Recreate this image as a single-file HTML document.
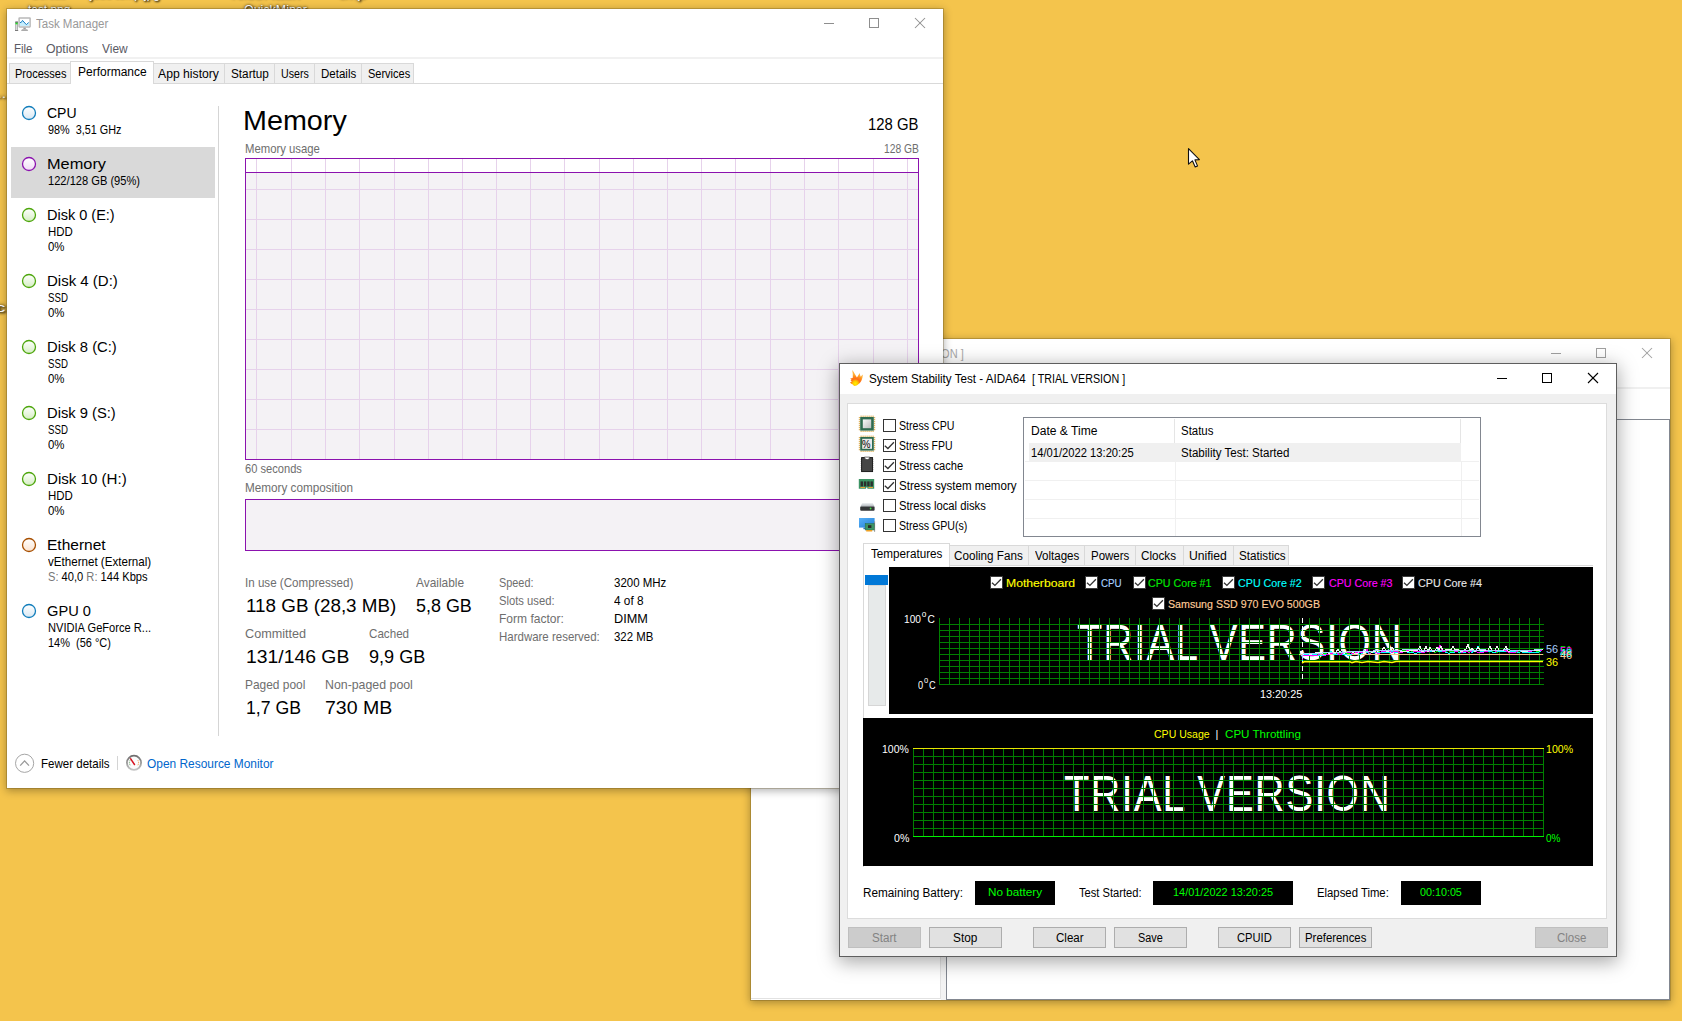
<!DOCTYPE html>
<html><head><meta charset="utf-8"><title>Desktop</title>
<style>
html,body{margin:0;padding:0}
body{width:1682px;height:1021px;overflow:hidden;background:#f4c44c;position:relative;font-family:"Liberation Sans",sans-serif}
.a{position:absolute}
.t{position:absolute;white-space:nowrap;line-height:1;transform-origin:0 0;font-family:"Liberation Sans",sans-serif}
.win{position:absolute;background:#fff;overflow:hidden}
.sh{position:absolute}
svg{position:absolute;overflow:visible}
.tab{position:absolute;background:#f0f0f0;border:1px solid #d9d9d9;box-sizing:border-box}
.cb{position:absolute;width:13px;height:13px;box-sizing:border-box;border:1px solid #333;background:#fff}
.btn{position:absolute;box-sizing:border-box;border:1px solid #adadad;background:#e1e1e1;height:21px}
.btn.dis{background:#cccccc;border-color:#bfbfbf}
.blk{position:absolute;background:#000}
</style></head><body>


<span class="t" style="left:27.91px;top:4.00px;font-size:12px;color:#fff;transform:scaleX(0.9913);text-shadow:1px 1px 2px #000,0 0 3px rgba(0,0,0,.9);">test.png</span>
<span class="t" style="left:244.38px;top:4.00px;font-size:12px;color:#fff;transform:scaleX(1.0360);text-shadow:1px 1px 2px #000,0 0 3px rgba(0,0,0,.9);">QuickMiner</span>
<span class="t" style="left:32.48px;top:-12.00px;font-size:12px;color:#fff;transform:scaleX(0.8716);text-shadow:1px 1px 2px #000,0 0 3px rgba(0,0,0,.9);">Bureau</span>
<span class="t" style="left:90.41px;top:-12.00px;font-size:12px;color:#fff;transform:scaleX(0.9782);text-shadow:1px 1px 2px #000,0 0 3px rgba(0,0,0,.9);">jobs temp.jpg</span>
<span class="t" style="left:231.20px;top:-12.00px;font-size:12px;color:#fff;transform:scaleX(1.3284);text-shadow:1px 1px 2px #000,0 0 3px rgba(0,0,0,.9);">NiceHash</span>
<span class="t" style="left:339.19px;top:-12.00px;font-size:12px;color:#fff;transform:scaleX(1.3559);text-shadow:1px 1px 2px #000,0 0 3px rgba(0,0,0,.9);">tmp</span>
<span class="t" style="left:-6.78px;top:88.00px;font-size:12px;color:#fff;transform:scaleX(1.3078);text-shadow:1px 1px 2px #000,0 0 3px rgba(0,0,0,.9);">...</span>
<span class="t" style="left:-5.05px;top:302.00px;font-size:12px;color:#fff;transform:scaleX(1.7442);text-shadow:1px 1px 2px #000,0 0 3px rgba(0,0,0,.9);">c</span>
<!-- ===== AIDA64 main window (behind, inactive) ===== -->
<div class="a" style="left:751px;top:339px;width:919px;height:661px;background:#fff;box-shadow:0 0 0 1px rgba(90,70,20,.27),0 2px 8px 1px rgba(0,0,0,.30)"></div>
<div class="a" style="left:751px;top:387px;width:919px;height:2px;background:#f0f0f0"></div>
<div class="a" style="left:751px;top:419px;width:190px;height:580px;box-sizing:border-box;border-right:1px solid #e2e2e2;border-bottom:1px solid #e2e2e2;background:#fff"></div>
<div class="a" style="left:941px;top:419px;width:5px;height:581px;background:#f3f3f3"></div>
<div class="a" style="left:946px;top:419px;width:724px;height:581px;box-sizing:border-box;border:1px solid #828790;background:#fff"></div>
<svg style="left:1548px;top:345px" width="110" height="18" viewBox="0 0 110 18">
 <g stroke="#a0a0a0" stroke-width="1" fill="none" shape-rendering="crispEdges">
  <line x1="3" y1="8.5" x2="13" y2="8.5"/>
  <rect x="48.5" y="3.5" width="9" height="9"/>
 </g>
 <g stroke="#a0a0a0" stroke-width="1.05" fill="none"><line x1="94" y1="3" x2="104" y2="13"/><line x1="104" y1="3" x2="94" y2="13"/></g>
</svg>
<span class="t" style="left:780.45px;top:348.00px;font-size:12.3px;color:#a8a8a8;transform:scaleX(0.8964);">AIDA64 Extreme&nbsp; [ TRIAL VERSION ]</span>

<!-- ===== Task Manager window ===== -->
<div class="a" style="left:7px;top:9px;width:936px;height:779px;background:#fff;box-shadow:0 0 0 1px rgba(90,70,20,.27),0 2px 8px 1px rgba(0,0,0,.30)"></div>
<!-- title icon -->
<svg style="left:14px;top:16px" width="18" height="16" viewBox="14 16 18 16">
 <defs><linearGradient id="twr" x1="0" y1="0" x2="1" y2="0"><stop offset="0" stop-color="#9a9a9a"/><stop offset=".5" stop-color="#e0e0e0"/><stop offset="1" stop-color="#9a9a9a"/></linearGradient></defs>
 <rect x="15.2" y="21.6" width="2.8" height="9" rx=".8" fill="url(#twr)"/>
 <rect x="15.4" y="21.6" width="2.4" height="1.1" fill="#4a4450"/>
 <rect x="15.5" y="22.7" width="2.2" height="1.6" fill="#22e022"/>
 <rect x="15" y="30" width="3.2" height=".9" fill="#6e6e6e"/>
 <rect x="19.1" y="17.9" width="11" height="9" rx=".4" fill="#fff" stroke="#b9b9b9" stroke-width="1.5"/>
 <path d="M19.9 22.6 L21.3 22.3 L22.5 20.4 L26.4 24.7 L28.7 22.4 L29.3 22.4 L29.3 26 L19.9 26 Z" fill="#c6edfc"/>
 <polyline points="20,22.6 21.3,22.3 22.5,20.4 26.4,24.7 28.7,22.4" fill="none" stroke="#1a80c6" stroke-width="1"/>
 <rect x="23.4" y="27.7" width="2.4" height="1.6" fill="#9c9c9c"/>
 <path d="M22 29.3 h5.2 l1 1.6 h-7.2 z" fill="#ababab"/>
</svg>
<!-- window controls -->
<svg style="left:820px;top:14px" width="110" height="20" viewBox="0 0 110 20">
 <g stroke="#8e8e8e" stroke-width="1" fill="none" shape-rendering="crispEdges">
  <line x1="4" y1="9.5" x2="14" y2="9.5"/>
  <rect x="49.5" y="4.5" width="9" height="9"/>
 </g>
 <g stroke="#8e8e8e" stroke-width="1.05" fill="none"><line x1="95" y1="4" x2="105" y2="14"/><line x1="105" y1="4" x2="95" y2="14"/></g>
</svg>
<!-- menu underline + tab strip line -->
<div class="a" style="left:7px;top:57px;width:936px;height:2px;background:#f1f1f1"></div>
<div class="a" style="left:7px;top:83px;width:936px;height:1px;background:#d9d9d9"></div>
<!-- tabs -->
<div class="tab" style="left:9px;top:63px;width:62px;height:21px"></div>
<div class="tab" style="left:153px;top:63px;width:72px;height:21px"></div>
<div class="tab" style="left:224px;top:63px;width:51px;height:21px"></div>
<div class="tab" style="left:274px;top:63px;width:41px;height:21px"></div>
<div class="tab" style="left:314px;top:63px;width:48px;height:21px"></div>
<div class="tab" style="left:361px;top:63px;width:53px;height:21px"></div>
<div class="tab" style="left:70px;top:61px;width:84px;height:23px;background:#fff;border-bottom:none"></div>
<!-- left list -->
<div class="a" style="left:11px;top:147px;width:204px;height:51px;background:#d9d9d9"></div>
<div class="a" style="left:218px;top:106px;width:1px;height:630px;background:#d5d5d5"></div>
<svg style="left:0;top:0" width="60" height="700" viewBox="0 0 60 700">
 <defs>
  <linearGradient id="gb" x1="0" y1="0" x2="0" y2="1"><stop offset="0" stop-color="#fff"/><stop offset="1" stop-color="#d9e8f3"/></linearGradient>
  <linearGradient id="gp" x1="0" y1="0" x2="0" y2="1"><stop offset="0" stop-color="#fff"/><stop offset="1" stop-color="#f0dcf5"/></linearGradient>
  <linearGradient id="gg" x1="0" y1="0" x2="0" y2="1"><stop offset="0" stop-color="#fff"/><stop offset="1" stop-color="#d5eec3"/></linearGradient>
  <linearGradient id="go" x1="0" y1="0" x2="0" y2="1"><stop offset="0" stop-color="#fff"/><stop offset="1" stop-color="#fbe3cf"/></linearGradient>
 </defs>
 <g stroke-width="1.3">
  <circle cx="29" cy="113" r="6.5" fill="url(#gb)" stroke="#117dbb"/>
  <circle cx="29" cy="164" r="6.5" fill="url(#gp)" stroke="#8b12ae"/>
  <circle cx="29" cy="215" r="6.5" fill="url(#gg)" stroke="#4da60c"/>
  <circle cx="29" cy="281" r="6.5" fill="url(#gg)" stroke="#4da60c"/>
  <circle cx="29" cy="347" r="6.5" fill="url(#gg)" stroke="#4da60c"/>
  <circle cx="29" cy="413" r="6.5" fill="url(#gg)" stroke="#4da60c"/>
  <circle cx="29" cy="479" r="6.5" fill="url(#gg)" stroke="#4da60c"/>
  <circle cx="29" cy="545" r="6.5" fill="url(#go)" stroke="#a74f01"/>
  <circle cx="29" cy="611" r="6.5" fill="url(#gb)" stroke="#117dbb"/>
 </g>
</svg>
<!-- memory usage graph -->
<div class="a" style="left:245px;top:158px;width:674px;height:302px;box-sizing:border-box;border:1px solid #8b12ae;background:#fff"></div>
<div class="a" style="left:246px;top:173px;width:672px;height:286px;background:#f4f2f5"></div>
<svg style="left:246px;top:159px" width="672" height="300" viewBox="246 159 672 300" shape-rendering="crispEdges">
 <g stroke="#e6d2eb" stroke-width="1">
  <line x1="256.5" y1="159" x2="256.5" y2="459"/><line x1="291.5" y1="159" x2="291.5" y2="459"/><line x1="325.5" y1="159" x2="325.5" y2="459"/><line x1="359.5" y1="159" x2="359.5" y2="459"/><line x1="394.5" y1="159" x2="394.5" y2="459"/><line x1="428.5" y1="159" x2="428.5" y2="459"/><line x1="462.5" y1="159" x2="462.5" y2="459"/><line x1="496.5" y1="159" x2="496.5" y2="459"/><line x1="530.5" y1="159" x2="530.5" y2="459"/><line x1="564.5" y1="159" x2="564.5" y2="459"/><line x1="599.5" y1="159" x2="599.5" y2="459"/><line x1="633.5" y1="159" x2="633.5" y2="459"/><line x1="667.5" y1="159" x2="667.5" y2="459"/><line x1="701.5" y1="159" x2="701.5" y2="459"/><line x1="735.5" y1="159" x2="735.5" y2="459"/><line x1="770.5" y1="159" x2="770.5" y2="459"/><line x1="804.5" y1="159" x2="804.5" y2="459"/><line x1="838.5" y1="159" x2="838.5" y2="459"/><line x1="873.5" y1="159" x2="873.5" y2="459"/><line x1="907.5" y1="159" x2="907.5" y2="459"/><line x1="246" y1="189.5" x2="918" y2="189.5"/><line x1="246" y1="219.5" x2="918" y2="219.5"/><line x1="246" y1="249.5" x2="918" y2="249.5"/><line x1="246" y1="279.5" x2="918" y2="279.5"/><line x1="246" y1="309.5" x2="918" y2="309.5"/><line x1="246" y1="339.5" x2="918" y2="339.5"/><line x1="246" y1="369.5" x2="918" y2="369.5"/><line x1="246" y1="399.5" x2="918" y2="399.5"/><line x1="246" y1="429.5" x2="918" y2="429.5"/>
 </g>
 <line x1="246" y1="172.5" x2="918" y2="172.5" stroke="#8b12ae" stroke-width="1"/>
</svg>
<!-- memory composition -->
<div class="a" style="left:245px;top:499px;width:674px;height:52px;box-sizing:border-box;border:1px solid #8b12ae;background:#f4f2f5"></div>
<!-- footer icons -->
<svg style="left:14px;top:752px" width="140" height="24" viewBox="14 752 140 24">
 <defs><linearGradient id="rg" x1="0" y1="0" x2="0" y2="1"><stop offset="0" stop-color="#6f6f6f"/><stop offset="1" stop-color="#c4c4c4"/></linearGradient></defs>
 <circle cx="24.6" cy="763.3" r="9.1" fill="#fff" stroke="#a6a6a6" stroke-width="1"/>
 <polyline points="20.2,765.6 24.6,760.9 29,765.6" fill="none" stroke="#9a9a9a" stroke-width="1.3"/>
 <line x1="117.5" y1="756" x2="117.5" y2="770" stroke="#d4d4d4" stroke-width="1"/>
 <circle cx="134" cy="762.8" r="7.1" fill="#fbfbfb" stroke="url(#rg)" stroke-width="1.8"/>
 <path d="M130.2 760.2 A4.6 4.6 0 0 0 130.4 765.6" fill="none" stroke="#5a9a5a" stroke-width=".8" stroke-dasharray="1.2 .8"/>
 <path d="M137.8 760.2 A4.6 4.6 0 0 1 137.6 765.6" fill="none" stroke="#f08020" stroke-width=".8" stroke-dasharray="1.2 .8"/>
 <path d="M129.6 758.4 L131 758 L135.4 764.6 L134.2 765.6 Z" fill="#d8101e"/>
</svg>
<span class="t" style="left:35.92px;top:18.00px;font-size:12.3px;color:#999;transform:scaleX(0.9362);">Task Manager</span>
<span class="t" style="left:14.03px;top:43.00px;font-size:12.3px;color:#5a5a64;transform:scaleX(0.9332);">File</span>
<span class="t" style="left:45.88px;top:43.00px;font-size:12.3px;color:#5a5a64;">Options</span>
<span class="t" style="left:101.60px;top:43.00px;font-size:12.3px;color:#5a5a64;transform:scaleX(0.9696);">View</span>
<span class="t" style="left:14.65px;top:68.00px;font-size:12.3px;color:#000;transform:scaleX(0.8964);">Processes</span>
<span class="t" style="left:77.90px;top:66.00px;font-size:12.3px;color:#000;transform:scaleX(0.9749);">Performance</span>
<span class="t" style="left:157.79px;top:68.00px;font-size:12.3px;color:#000;transform:scaleX(0.9909);">App history</span>
<span class="t" style="left:230.71px;top:68.00px;font-size:12.3px;color:#000;transform:scaleX(0.9563);">Startup</span>
<span class="t" style="left:280.87px;top:68.00px;font-size:12.3px;color:#000;transform:scaleX(0.8668);">Users</span>
<span class="t" style="left:320.82px;top:68.00px;font-size:12.3px;color:#000;transform:scaleX(0.9365);">Details</span>
<span class="t" style="left:367.75px;top:68.00px;font-size:12.3px;color:#000;transform:scaleX(0.8943);">Services</span>
<span class="t" style="left:47.00px;top:105.00px;font-size:15.2px;color:#000;transform:scaleX(0.9222);">CPU</span>
<span class="t" style="left:47.76px;top:124.00px;font-size:12.2px;color:#000;transform:scaleX(0.8887);">98%&nbsp; 3,51 GHz</span>
<span class="t" style="left:46.88px;top:156.00px;font-size:15.2px;color:#000;transform:scaleX(1.0763);">Memory</span>
<span class="t" style="left:47.74px;top:175.00px;font-size:12.2px;color:#000;transform:scaleX(0.9121);">122/128 GB (95%)</span>
<span class="t" style="left:46.97px;top:207.00px;font-size:15.2px;color:#000;transform:scaleX(0.9552);">Disk 0 (E:)</span>
<span class="t" style="left:47.73px;top:226.00px;font-size:12.2px;color:#000;transform:scaleX(0.9393);">HDD</span>
<span class="t" style="left:47.73px;top:241.00px;font-size:12.2px;color:#000;transform:scaleX(0.9361);">0%</span>
<span class="t" style="left:46.95px;top:273.00px;font-size:15.2px;color:#000;transform:scaleX(0.9879);">Disk 4 (D:)</span>
<span class="t" style="left:47.82px;top:292.00px;font-size:12.2px;color:#000;transform:scaleX(0.7931);">SSD</span>
<span class="t" style="left:47.73px;top:307.00px;font-size:12.2px;color:#000;transform:scaleX(0.9361);">0%</span>
<span class="t" style="left:46.96px;top:339.00px;font-size:15.2px;color:#000;transform:scaleX(0.9723);">Disk 8 (C:)</span>
<span class="t" style="left:47.82px;top:358.00px;font-size:12.2px;color:#000;transform:scaleX(0.7931);">SSD</span>
<span class="t" style="left:47.73px;top:373.00px;font-size:12.2px;color:#000;transform:scaleX(0.9361);">0%</span>
<span class="t" style="left:46.96px;top:405.00px;font-size:15.2px;color:#000;transform:scaleX(0.9695);">Disk 9 (S:)</span>
<span class="t" style="left:47.82px;top:424.00px;font-size:12.2px;color:#000;transform:scaleX(0.7931);">SSD</span>
<span class="t" style="left:47.73px;top:439.00px;font-size:12.2px;color:#000;transform:scaleX(0.9361);">0%</span>
<span class="t" style="left:46.94px;top:471.00px;font-size:15.2px;color:#000;transform:scaleX(0.9948);">Disk 10 (H:)</span>
<span class="t" style="left:47.73px;top:490.00px;font-size:12.2px;color:#000;transform:scaleX(0.9393);">HDD</span>
<span class="t" style="left:47.73px;top:505.00px;font-size:12.2px;color:#000;transform:scaleX(0.9361);">0%</span>
<span class="t" style="left:46.92px;top:537.00px;font-size:15.2px;color:#000;transform:scaleX(1.0220);">Ethernet</span>
<span class="t" style="left:47.72px;top:556.00px;font-size:12.2px;color:#000;transform:scaleX(0.9513);">vEthernet (External)</span>
<span class="t" style="left:47.74px;top:571.00px;font-size:12.2px;color:#000;transform:scaleX(0.9128);"><span style="color:#777">S:</span> 40,0 <span style="color:#777">R:</span> 144 Kbps</span>
<span class="t" style="left:46.97px;top:603.00px;font-size:15.2px;color:#000;transform:scaleX(0.9637);">GPU 0</span>
<span class="t" style="left:47.74px;top:622.00px;font-size:12.2px;color:#000;transform:scaleX(0.9113);">NVIDIA GeForce R...</span>
<span class="t" style="left:47.75px;top:637.00px;font-size:12.2px;color:#000;transform:scaleX(0.8993);">14%&nbsp; (56 °C)</span>
<span class="t" style="left:243.16px;top:106.00px;font-size:28.3px;color:#000;transform:scaleX(1.0157);">Memory</span>
<span class="t" style="left:868.36px;top:116.00px;font-size:16.3px;color:#000;transform:scaleX(0.9135);">128 GB</span>
<span class="t" style="left:244.93px;top:143.00px;font-size:12.2px;color:#6e6e6e;transform:scaleX(0.9291);">Memory usage</span>
<span class="t" style="left:884.38px;top:143.00px;font-size:12.2px;color:#6e6e6e;transform:scaleX(0.8471);">128 GB</span>
<span class="t" style="left:244.74px;top:463.00px;font-size:12.2px;color:#6e6e6e;transform:scaleX(0.9123);">60 seconds</span>
<span class="t" style="left:244.71px;top:482.00px;font-size:12.2px;color:#6e6e6e;transform:scaleX(0.9607);">Memory composition</span>
<span class="t" style="left:244.92px;top:577.00px;font-size:12.2px;color:#6e6e6e;transform:scaleX(0.9518);">In use (Compressed)</span>
<span class="t" style="left:416.40px;top:577.00px;font-size:12.2px;color:#6e6e6e;transform:scaleX(0.9763);">Available</span>
<span class="t" style="left:244.87px;top:628.00px;font-size:12.2px;color:#6e6e6e;transform:scaleX(1.0376);">Committed</span>
<span class="t" style="left:369.17px;top:628.00px;font-size:12.2px;color:#6e6e6e;transform:scaleX(0.9536);">Cached</span>
<span class="t" style="left:244.90px;top:679.00px;font-size:12.2px;color:#6e6e6e;transform:scaleX(0.9783);">Paged pool</span>
<span class="t" style="left:325.13px;top:679.00px;font-size:12.2px;color:#6e6e6e;transform:scaleX(1.0129);">Non-paged pool</span>
<span class="t" style="left:245.56px;top:596.00px;font-size:19.2px;color:#000;transform:scaleX(0.9811);">118 GB (28,3 MB)</span>
<span class="t" style="left:416.30px;top:596.00px;font-size:19.2px;color:#000;transform:scaleX(0.9342);">5,8 GB</span>
<span class="t" style="left:245.53px;top:647.00px;font-size:19.2px;color:#000;transform:scaleX(1.0091);">131/146 GB</span>
<span class="t" style="left:368.60px;top:647.00px;font-size:19.2px;color:#000;transform:scaleX(0.9419);">9,9 GB</span>
<span class="t" style="left:245.62px;top:698.00px;font-size:19.2px;color:#000;transform:scaleX(0.9205);">1,7 GB</span>
<span class="t" style="left:324.52px;top:698.00px;font-size:19.2px;color:#000;transform:scaleX(1.0186);">730 MB</span>
<span class="t" style="left:499.46px;top:577.00px;font-size:12.2px;color:#6e6e6e;transform:scaleX(0.8932);">Speed:</span>
<span class="t" style="left:499.44px;top:595.00px;font-size:12.2px;color:#6e6e6e;transform:scaleX(0.9211);">Slots used:</span>
<span class="t" style="left:499.40px;top:613.00px;font-size:12.2px;color:#6e6e6e;transform:scaleX(0.9871);">Form factor:</span>
<span class="t" style="left:499.43px;top:631.00px;font-size:12.2px;color:#6e6e6e;transform:scaleX(0.9418);">Hardware reserved:</span>
<span class="t" style="left:613.93px;top:577.00px;font-size:12.2px;color:#000;transform:scaleX(0.9416);">3200 MHz</span>
<span class="t" style="left:613.91px;top:595.00px;font-size:12.2px;color:#000;transform:scaleX(0.9698);">4 of 8</span>
<span class="t" style="left:613.86px;top:613.00px;font-size:12.2px;color:#000;transform:scaleX(1.0428);">DIMM</span>
<span class="t" style="left:613.93px;top:631.00px;font-size:12.2px;color:#000;transform:scaleX(0.9353);">322 MB</span>
<span class="t" style="left:40.62px;top:758.00px;font-size:12.2px;color:#000;transform:scaleX(0.9465);">Fewer details</span>
<span class="t" style="left:146.90px;top:758.00px;font-size:12.2px;color:#0066cc;transform:scaleX(0.9779);">Open Resource Monitor</span>

<!-- ===== System Stability Test window ===== -->
<div class="a" style="left:839px;top:363px;width:778px;height:594px;box-sizing:border-box;border:1px solid #5e5e5e;background:#f0f0f0;box-shadow:0 4px 18px 1px rgba(0,0,0,.35)"></div>
<div class="a" style="left:840px;top:364px;width:776px;height:30px;background:#fff"></div>
<div class="a" style="left:847px;top:403px;width:760px;height:516px;box-sizing:border-box;border:1px solid #dcdcdc;background:#fff"></div>
<svg style="left:848px;top:368px" width="18" height="20" viewBox="848 368 18 20">
 <defs>
  <radialGradient id="fl" cx="855.4" cy="383.6" r="9.5" gradientUnits="userSpaceOnUse"><stop offset="0" stop-color="#fff200"/><stop offset=".28" stop-color="#ffc400"/><stop offset=".5" stop-color="#ff6a1a"/><stop offset=".75" stop-color="#ff8c1a"/><stop offset="1" stop-color="#ffb23a"/></radialGradient>
 </defs>
 <path d="M852.3 369.9 C853.6 371.6 855.4 375 856.9 377.4 C857.8 376.2 858.9 374.4 859.5 372.9 C859.9 374.2 860.3 375.6 860.7 376.7 C861.4 376 862.2 375.2 862.8 374.6 C862.8 376.6 862.4 378.6 861.6 380.3 C860.8 382 859.8 383.3 858.3 384.3 C857.2 385.2 855.9 385.9 854.7 386 C853.9 385.8 853.3 385.3 852.8 384.6 C851.8 384 850.8 383.2 850 382.4 C850.7 382.1 851.3 381.7 851.9 381.2 C851.3 380.9 850.8 380.5 850.4 380 C850.8 379.8 851.2 379.5 851.5 379.2 C850.9 379 850.4 378.7 850 378.3 C851 378.2 852 378 852.8 377.7 C852.9 375.2 852.8 372.4 852.3 369.9 Z" fill="url(#fl)"/>
</svg>
<svg style="left:1490px;top:368px" width="120" height="22" viewBox="1490 368 120 22">
 <g stroke="#000" stroke-width="1" fill="none" shape-rendering="crispEdges">
  <line x1="1497" y1="378.5" x2="1507" y2="378.5"/>
  <rect x="1542.5" y="373.5" width="9" height="9"/>
 </g>
 <g stroke="#000" stroke-width="1.1" fill="none"><line x1="1588" y1="373" x2="1598" y2="383"/><line x1="1598" y1="373" x2="1588" y2="383"/></g>
</svg>
<svg style="left:856px;top:412px" width="24" height="126" viewBox="856 412 24 126">
 <defs>
  <linearGradient id="chipg" x1="0" y1="0" x2="1" y2="1"><stop offset="0" stop-color="#fafafa"/><stop offset="1" stop-color="#bdbdbd"/></linearGradient>
  <linearGradient id="hddg" x1="0" y1="0" x2="0" y2="1"><stop offset="0" stop-color="#f2f4f6"/><stop offset="1" stop-color="#a9b0b6"/></linearGradient>
  <linearGradient id="mong" x1="0" y1="0" x2="1" y2="1"><stop offset="0" stop-color="#58b0f8"/><stop offset="1" stop-color="#1f7fd6"/></linearGradient>
 </defs>
 <!-- cpu -->
 <g fill="#d8a23a"><rect x="860.6" y="415.6" width="1" height="1.3"/><rect x="860.6" y="430.7" width="1" height="1.3"/><rect x="858.8" y="417.2" width="1.3" height="1"/><rect x="873.9" y="417.2" width="1.3" height="1"/><rect x="862.6" y="415.6" width="1" height="1.3"/><rect x="862.6" y="430.7" width="1" height="1.3"/><rect x="858.8" y="419.2" width="1.3" height="1"/><rect x="873.9" y="419.2" width="1.3" height="1"/><rect x="864.6" y="415.6" width="1" height="1.3"/><rect x="864.6" y="430.7" width="1" height="1.3"/><rect x="858.8" y="421.2" width="1.3" height="1"/><rect x="873.9" y="421.2" width="1.3" height="1"/><rect x="866.6" y="415.6" width="1" height="1.3"/><rect x="866.6" y="430.7" width="1" height="1.3"/><rect x="858.8" y="423.2" width="1.3" height="1"/><rect x="873.9" y="423.2" width="1.3" height="1"/><rect x="868.6" y="415.6" width="1" height="1.3"/><rect x="868.6" y="430.7" width="1" height="1.3"/><rect x="858.8" y="425.2" width="1.3" height="1"/><rect x="873.9" y="425.2" width="1.3" height="1"/><rect x="870.6" y="415.6" width="1" height="1.3"/><rect x="870.6" y="430.7" width="1" height="1.3"/><rect x="858.8" y="427.2" width="1.3" height="1"/><rect x="873.9" y="427.2" width="1.3" height="1"/><rect x="872.6" y="415.6" width="1" height="1.3"/><rect x="872.6" y="430.7" width="1" height="1.3"/><rect x="858.8" y="429.2" width="1.3" height="1"/><rect x="873.9" y="429.2" width="1.3" height="1"/><rect x="860.6" y="435.6" width="1" height="1.3"/><rect x="860.6" y="450.7" width="1" height="1.3"/><rect x="858.8" y="437.2" width="1.3" height="1"/><rect x="873.9" y="437.2" width="1.3" height="1"/><rect x="862.6" y="435.6" width="1" height="1.3"/><rect x="862.6" y="450.7" width="1" height="1.3"/><rect x="858.8" y="439.2" width="1.3" height="1"/><rect x="873.9" y="439.2" width="1.3" height="1"/><rect x="864.6" y="435.6" width="1" height="1.3"/><rect x="864.6" y="450.7" width="1" height="1.3"/><rect x="858.8" y="441.2" width="1.3" height="1"/><rect x="873.9" y="441.2" width="1.3" height="1"/><rect x="866.6" y="435.6" width="1" height="1.3"/><rect x="866.6" y="450.7" width="1" height="1.3"/><rect x="858.8" y="443.2" width="1.3" height="1"/><rect x="873.9" y="443.2" width="1.3" height="1"/><rect x="868.6" y="435.6" width="1" height="1.3"/><rect x="868.6" y="450.7" width="1" height="1.3"/><rect x="858.8" y="445.2" width="1.3" height="1"/><rect x="873.9" y="445.2" width="1.3" height="1"/><rect x="870.6" y="435.6" width="1" height="1.3"/><rect x="870.6" y="450.7" width="1" height="1.3"/><rect x="858.8" y="447.2" width="1.3" height="1"/><rect x="873.9" y="447.2" width="1.3" height="1"/><rect x="872.6" y="435.6" width="1" height="1.3"/><rect x="872.6" y="450.7" width="1" height="1.3"/><rect x="858.8" y="449.2" width="1.3" height="1"/><rect x="873.9" y="449.2" width="1.3" height="1"/></g>
 <rect x="860.2" y="417" width="13.6" height="13.6" fill="#2f6b4f"/>
 <rect x="862.8" y="419.4" width="8.4" height="8.8" fill="url(#chipg)"/>
 <!-- fpu -->
 <rect x="860.2" y="437" width="13.6" height="13.6" fill="#2f6b4f"/>
 <rect x="862.2" y="438.8" width="9.8" height="10" fill="#e9e9e9"/>
 <!-- cache chip -->
 <g stroke="#dcdcdc" stroke-width="1.6" stroke-dasharray="1 1"><line x1="861" y1="459" x2="861" y2="471"/><line x1="873.2" y1="459" x2="873.2" y2="471"/></g>
 <rect x="861.6" y="457.6" width="11" height="14" fill="#454545" stroke="#111" stroke-width=".9"/>
 <path d="M864.4 457.1 a2.7 2.6 0 0 0 5.4 0 z" fill="#fff" stroke="#111" stroke-width=".6"/>
 <!-- memory -->
 <path d="M858.8 479 h15.4 v9.8 h-6.8 v-1.2 h-1.4 v1.2 h-7.2 z" fill="#3c9464"/>
 <g fill="#2b2f2d"><rect x="860.6" y="481.4" width="2.4" height="5"/><rect x="863.9" y="481.4" width="2.4" height="5"/><rect x="867.2" y="481.4" width="2.4" height="5"/><rect x="870.5" y="481.4" width="2.4" height="5"/></g>
 <g fill="#e8a03a"><rect x="860.4" y="487" width="4.6" height="1"/><rect x="868.4" y="487" width="4.6" height="1"/></g>
 <!-- disk -->
 <path d="M862.2 502.9 h10.6 l1.8 3.8 h-14.2 z" fill="url(#hddg)"/>
 <rect x="860.2" y="506.5" width="14.4" height="4.2" rx="1" fill="#343638"/>
 <circle cx="870.6" cy="508.5" r=".9" fill="#43e043"/>
 <!-- gpu -->
 <rect x="859" y="518" width="15.6" height="9.6" fill="url(#mong)"/>
 <rect x="863.4" y="527.6" width="3.4" height="1.6" fill="#2a6fb4"/>
 <rect x="874.2" y="521.4" width=".9" height="10.4" fill="#8a8a8a"/>
 <rect x="865.2" y="523.6" width="9" height="6.4" fill="#3c9464" stroke="#2a6a48" stroke-width=".5"/>
 <rect x="868" y="525.2" width="3.4" height="2.8" fill="#2a2a2a"/>
 <rect x="866.2" y="530" width="6" height="1.5" fill="#f0a020"/>
</svg>
<div class="cb" style="left:883px;top:419px"></div>
<div class="cb" style="left:883px;top:439px"></div>
<svg class="a" style="left:883px;top:439px" width="13" height="13" viewBox="0 0 13 13"><polyline points="1.8,6.7 4.9,9.55 10.9,3.2" fill="none" stroke="#333" stroke-width="1.25"/></svg>
<div class="cb" style="left:883px;top:459px"></div>
<svg class="a" style="left:883px;top:459px" width="13" height="13" viewBox="0 0 13 13"><polyline points="1.8,6.7 4.9,9.55 10.9,3.2" fill="none" stroke="#333" stroke-width="1.25"/></svg>
<div class="cb" style="left:883px;top:479px"></div>
<svg class="a" style="left:883px;top:479px" width="13" height="13" viewBox="0 0 13 13"><polyline points="1.8,6.7 4.9,9.55 10.9,3.2" fill="none" stroke="#333" stroke-width="1.25"/></svg>
<div class="cb" style="left:883px;top:499px"></div>
<div class="cb" style="left:883px;top:519px"></div>
<div class="a" style="left:1023px;top:417px;width:458px;height:120px;box-sizing:border-box;border:1px solid #828790;background:#fff"></div>
<div class="a" style="left:1029px;top:443px;width:432px;height:18px;background:#f0f0f0"></div>
<div class="a" style="left:1174px;top:419px;width:1px;height:24px;background:#e5e5e5"></div>
<div class="a" style="left:1460px;top:419px;width:1px;height:24px;background:#e5e5e5"></div>
<div class="a" style="left:1025px;top:461px;width:454px;height:1px;background:#f0f0f0"></div>
<div class="a" style="left:1025px;top:480px;width:454px;height:1px;background:#f0f0f0"></div>
<div class="a" style="left:1025px;top:499px;width:454px;height:1px;background:#f0f0f0"></div>
<div class="a" style="left:1025px;top:518px;width:454px;height:1px;background:#f0f0f0"></div>
<div class="a" style="left:1175px;top:461px;width:1px;height:75px;background:#f0f0f0"></div>
<div class="a" style="left:1461px;top:461px;width:1px;height:75px;background:#f0f0f0"></div>
<div class="a" style="left:863px;top:565px;width:730px;height:1px;background:#d9d9d9"></div>
<div class="a" style="left:863px;top:566px;width:1px;height:301px;background:#d9d9d9"></div>
<div class="tab" style="left:949px;top:545px;width:80px;height:21px"></div>
<div class="tab" style="left:1028px;top:545px;width:57px;height:21px"></div>
<div class="tab" style="left:1084px;top:545px;width:52px;height:21px"></div>
<div class="tab" style="left:1135px;top:545px;width:49px;height:21px"></div>
<div class="tab" style="left:1183px;top:545px;width:51px;height:21px"></div>
<div class="tab" style="left:1233px;top:545px;width:56px;height:21px"></div>
<div class="tab" style="left:863px;top:543px;width:87px;height:24px;background:#fff;border-bottom:none"></div>
<div class="a" style="left:868px;top:585px;width:18px;height:121px;box-sizing:border-box;border:1px solid #d6d6d6;background:#e7eaea"></div>
<div class="a" style="left:865px;top:575px;width:23px;height:10px;background:#0078d7"></div>
<div class="blk" style="left:889px;top:567px;width:704px;height:147px"></div>
<div class="blk" style="left:863px;top:718px;width:730px;height:148px"></div>
<div class="blk" style="left:975px;top:881px;width:80px;height:24px"></div>
<div class="blk" style="left:1153px;top:881px;width:140px;height:24px"></div>
<div class="blk" style="left:1401px;top:881px;width:80px;height:24px"></div>
<div class="btn dis" style="left:848px;top:927px;width:73px"></div>
<div class="btn" style="left:929px;top:927px;width:73px"></div>
<div class="btn" style="left:1033px;top:927px;width:73px"></div>
<div class="btn" style="left:1114px;top:927px;width:73px"></div>
<div class="btn" style="left:1218px;top:927px;width:73px"></div>
<div class="btn" style="left:1299px;top:927px;width:73px"></div>
<div class="btn dis" style="left:1535px;top:927px;width:73px"></div>
<svg class="a" style="left:990px;top:576px" width="13" height="13" viewBox="0 0 13 13"><rect x=".5" y=".5" width="12" height="12" fill="#fff" stroke="#3c3c3c" stroke-width="1"/><polyline points="2,6.8 4.9,9.45 10.9,3.3" fill="none" stroke="#333" stroke-width="1.3"/></svg>
<svg class="a" style="left:1085px;top:576px" width="13" height="13" viewBox="0 0 13 13"><rect x=".5" y=".5" width="12" height="12" fill="#fff" stroke="#3c3c3c" stroke-width="1"/><polyline points="2,6.8 4.9,9.45 10.9,3.3" fill="none" stroke="#333" stroke-width="1.3"/></svg>
<svg class="a" style="left:1133px;top:576px" width="13" height="13" viewBox="0 0 13 13"><rect x=".5" y=".5" width="12" height="12" fill="#fff" stroke="#3c3c3c" stroke-width="1"/><polyline points="2,6.8 4.9,9.45 10.9,3.3" fill="none" stroke="#333" stroke-width="1.3"/></svg>
<svg class="a" style="left:1222px;top:576px" width="13" height="13" viewBox="0 0 13 13"><rect x=".5" y=".5" width="12" height="12" fill="#fff" stroke="#3c3c3c" stroke-width="1"/><polyline points="2,6.8 4.9,9.45 10.9,3.3" fill="none" stroke="#333" stroke-width="1.3"/></svg>
<svg class="a" style="left:1312px;top:576px" width="13" height="13" viewBox="0 0 13 13"><rect x=".5" y=".5" width="12" height="12" fill="#fff" stroke="#3c3c3c" stroke-width="1"/><polyline points="2,6.8 4.9,9.45 10.9,3.3" fill="none" stroke="#333" stroke-width="1.3"/></svg>
<svg class="a" style="left:1402px;top:576px" width="13" height="13" viewBox="0 0 13 13"><rect x=".5" y=".5" width="12" height="12" fill="#fff" stroke="#3c3c3c" stroke-width="1"/><polyline points="2,6.8 4.9,9.45 10.9,3.3" fill="none" stroke="#333" stroke-width="1.3"/></svg>
<svg class="a" style="left:1152px;top:597px" width="13" height="13" viewBox="0 0 13 13"><rect x=".5" y=".5" width="12" height="12" fill="#fff" stroke="#3c3c3c" stroke-width="1"/><polyline points="2,6.8 4.9,9.45 10.9,3.3" fill="none" stroke="#333" stroke-width="1.3"/></svg>
<span class="t" style="left:1076.92px;top:618.00px;font-size:49.4px;color:#fff;transform:scaleX(0.8407);letter-spacing:1px;">TRIAL VERSION</span>
<span class="t" style="left:1064.22px;top:769.00px;font-size:49.4px;color:#fff;transform:scaleX(0.8441);letter-spacing:1px;">TRIAL VERSION</span>
<svg style="left:0;top:0" width="1682" height="1021" viewBox="0 0 1682 1021">
<g stroke="#008000" stroke-width="1" shape-rendering="crispEdges">
<line x1="939.5" y1="618" x2="939.5" y2="685"/>
<line x1="949.5" y1="618" x2="949.5" y2="685"/>
<line x1="959.5" y1="618" x2="959.5" y2="685"/>
<line x1="969.5" y1="618" x2="969.5" y2="685"/>
<line x1="979.5" y1="618" x2="979.5" y2="685"/>
<line x1="989.5" y1="618" x2="989.5" y2="685"/>
<line x1="999.5" y1="618" x2="999.5" y2="685"/>
<line x1="1009.5" y1="618" x2="1009.5" y2="685"/>
<line x1="1019.5" y1="618" x2="1019.5" y2="685"/>
<line x1="1029.5" y1="618" x2="1029.5" y2="685"/>
<line x1="1039.5" y1="618" x2="1039.5" y2="685"/>
<line x1="1049.5" y1="618" x2="1049.5" y2="685"/>
<line x1="1059.5" y1="618" x2="1059.5" y2="685"/>
<line x1="1069.5" y1="618" x2="1069.5" y2="685"/>
<line x1="1079.5" y1="618" x2="1079.5" y2="685"/>
<line x1="1089.5" y1="618" x2="1089.5" y2="685"/>
<line x1="1099.5" y1="618" x2="1099.5" y2="685"/>
<line x1="1109.5" y1="618" x2="1109.5" y2="685"/>
<line x1="1119.5" y1="618" x2="1119.5" y2="685"/>
<line x1="1129.5" y1="618" x2="1129.5" y2="685"/>
<line x1="1139.5" y1="618" x2="1139.5" y2="685"/>
<line x1="1149.5" y1="618" x2="1149.5" y2="685"/>
<line x1="1159.5" y1="618" x2="1159.5" y2="685"/>
<line x1="1169.5" y1="618" x2="1169.5" y2="685"/>
<line x1="1179.5" y1="618" x2="1179.5" y2="685"/>
<line x1="1189.5" y1="618" x2="1189.5" y2="685"/>
<line x1="1199.5" y1="618" x2="1199.5" y2="685"/>
<line x1="1209.5" y1="618" x2="1209.5" y2="685"/>
<line x1="1219.5" y1="618" x2="1219.5" y2="685"/>
<line x1="1229.5" y1="618" x2="1229.5" y2="685"/>
<line x1="1239.5" y1="618" x2="1239.5" y2="685"/>
<line x1="1249.5" y1="618" x2="1249.5" y2="685"/>
<line x1="1259.5" y1="618" x2="1259.5" y2="685"/>
<line x1="1269.5" y1="618" x2="1269.5" y2="685"/>
<line x1="1279.5" y1="618" x2="1279.5" y2="685"/>
<line x1="1289.5" y1="618" x2="1289.5" y2="685"/>
<line x1="1299.5" y1="618" x2="1299.5" y2="685"/>
<line x1="1309.5" y1="618" x2="1309.5" y2="685"/>
<line x1="1319.5" y1="618" x2="1319.5" y2="685"/>
<line x1="1329.5" y1="618" x2="1329.5" y2="685"/>
<line x1="1339.5" y1="618" x2="1339.5" y2="685"/>
<line x1="1349.5" y1="618" x2="1349.5" y2="685"/>
<line x1="1359.5" y1="618" x2="1359.5" y2="685"/>
<line x1="1369.5" y1="618" x2="1369.5" y2="685"/>
<line x1="1379.5" y1="618" x2="1379.5" y2="685"/>
<line x1="1389.5" y1="618" x2="1389.5" y2="685"/>
<line x1="1399.5" y1="618" x2="1399.5" y2="685"/>
<line x1="1409.5" y1="618" x2="1409.5" y2="685"/>
<line x1="1419.5" y1="618" x2="1419.5" y2="685"/>
<line x1="1429.5" y1="618" x2="1429.5" y2="685"/>
<line x1="1439.5" y1="618" x2="1439.5" y2="685"/>
<line x1="1449.5" y1="618" x2="1449.5" y2="685"/>
<line x1="1459.5" y1="618" x2="1459.5" y2="685"/>
<line x1="1469.5" y1="618" x2="1469.5" y2="685"/>
<line x1="1479.5" y1="618" x2="1479.5" y2="685"/>
<line x1="1489.5" y1="618" x2="1489.5" y2="685"/>
<line x1="1499.5" y1="618" x2="1499.5" y2="685"/>
<line x1="1509.5" y1="618" x2="1509.5" y2="685"/>
<line x1="1519.5" y1="618" x2="1519.5" y2="685"/>
<line x1="1529.5" y1="618" x2="1529.5" y2="685"/>
<line x1="1539.5" y1="618" x2="1539.5" y2="685"/>
<line x1="939" y1="624.5" x2="1544" y2="624.5"/>
<line x1="939" y1="630.5" x2="1544" y2="630.5"/>
<line x1="939" y1="636.5" x2="1544" y2="636.5"/>
<line x1="939" y1="642.5" x2="1544" y2="642.5"/>
<line x1="939" y1="648.5" x2="1544" y2="648.5"/>
<line x1="939" y1="654.5" x2="1544" y2="654.5"/>
<line x1="939" y1="660.5" x2="1544" y2="660.5"/>
<line x1="939" y1="666.5" x2="1544" y2="666.5"/>
<line x1="939" y1="672.5" x2="1544" y2="672.5"/>
<line x1="939" y1="678.5" x2="1544" y2="678.5"/>
<line x1="939" y1="684.5" x2="1544" y2="684.5"/>
<line x1="913.5" y1="748" x2="913.5" y2="837"/>
<line x1="923.5" y1="748" x2="923.5" y2="837"/>
<line x1="933.5" y1="748" x2="933.5" y2="837"/>
<line x1="943.5" y1="748" x2="943.5" y2="837"/>
<line x1="953.5" y1="748" x2="953.5" y2="837"/>
<line x1="963.5" y1="748" x2="963.5" y2="837"/>
<line x1="973.5" y1="748" x2="973.5" y2="837"/>
<line x1="983.5" y1="748" x2="983.5" y2="837"/>
<line x1="993.5" y1="748" x2="993.5" y2="837"/>
<line x1="1003.5" y1="748" x2="1003.5" y2="837"/>
<line x1="1013.5" y1="748" x2="1013.5" y2="837"/>
<line x1="1023.5" y1="748" x2="1023.5" y2="837"/>
<line x1="1033.5" y1="748" x2="1033.5" y2="837"/>
<line x1="1043.5" y1="748" x2="1043.5" y2="837"/>
<line x1="1053.5" y1="748" x2="1053.5" y2="837"/>
<line x1="1063.5" y1="748" x2="1063.5" y2="837"/>
<line x1="1073.5" y1="748" x2="1073.5" y2="837"/>
<line x1="1083.5" y1="748" x2="1083.5" y2="837"/>
<line x1="1093.5" y1="748" x2="1093.5" y2="837"/>
<line x1="1103.5" y1="748" x2="1103.5" y2="837"/>
<line x1="1113.5" y1="748" x2="1113.5" y2="837"/>
<line x1="1123.5" y1="748" x2="1123.5" y2="837"/>
<line x1="1133.5" y1="748" x2="1133.5" y2="837"/>
<line x1="1143.5" y1="748" x2="1143.5" y2="837"/>
<line x1="1153.5" y1="748" x2="1153.5" y2="837"/>
<line x1="1163.5" y1="748" x2="1163.5" y2="837"/>
<line x1="1173.5" y1="748" x2="1173.5" y2="837"/>
<line x1="1183.5" y1="748" x2="1183.5" y2="837"/>
<line x1="1193.5" y1="748" x2="1193.5" y2="837"/>
<line x1="1203.5" y1="748" x2="1203.5" y2="837"/>
<line x1="1213.5" y1="748" x2="1213.5" y2="837"/>
<line x1="1223.5" y1="748" x2="1223.5" y2="837"/>
<line x1="1233.5" y1="748" x2="1233.5" y2="837"/>
<line x1="1243.5" y1="748" x2="1243.5" y2="837"/>
<line x1="1253.5" y1="748" x2="1253.5" y2="837"/>
<line x1="1263.5" y1="748" x2="1263.5" y2="837"/>
<line x1="1273.5" y1="748" x2="1273.5" y2="837"/>
<line x1="1283.5" y1="748" x2="1283.5" y2="837"/>
<line x1="1293.5" y1="748" x2="1293.5" y2="837"/>
<line x1="1303.5" y1="748" x2="1303.5" y2="837"/>
<line x1="1313.5" y1="748" x2="1313.5" y2="837"/>
<line x1="1323.5" y1="748" x2="1323.5" y2="837"/>
<line x1="1333.5" y1="748" x2="1333.5" y2="837"/>
<line x1="1343.5" y1="748" x2="1343.5" y2="837"/>
<line x1="1353.5" y1="748" x2="1353.5" y2="837"/>
<line x1="1363.5" y1="748" x2="1363.5" y2="837"/>
<line x1="1373.5" y1="748" x2="1373.5" y2="837"/>
<line x1="1383.5" y1="748" x2="1383.5" y2="837"/>
<line x1="1393.5" y1="748" x2="1393.5" y2="837"/>
<line x1="1403.5" y1="748" x2="1403.5" y2="837"/>
<line x1="1413.5" y1="748" x2="1413.5" y2="837"/>
<line x1="1423.5" y1="748" x2="1423.5" y2="837"/>
<line x1="1433.5" y1="748" x2="1433.5" y2="837"/>
<line x1="1443.5" y1="748" x2="1443.5" y2="837"/>
<line x1="1453.5" y1="748" x2="1453.5" y2="837"/>
<line x1="1463.5" y1="748" x2="1463.5" y2="837"/>
<line x1="1473.5" y1="748" x2="1473.5" y2="837"/>
<line x1="1483.5" y1="748" x2="1483.5" y2="837"/>
<line x1="1493.5" y1="748" x2="1493.5" y2="837"/>
<line x1="1503.5" y1="748" x2="1503.5" y2="837"/>
<line x1="1513.5" y1="748" x2="1513.5" y2="837"/>
<line x1="1523.5" y1="748" x2="1523.5" y2="837"/>
<line x1="1533.5" y1="748" x2="1533.5" y2="837"/>
<line x1="1543.5" y1="748" x2="1543.5" y2="837"/>
<line x1="913" y1="756.5" x2="1544" y2="756.5"/>
<line x1="913" y1="764.5" x2="1544" y2="764.5"/>
<line x1="913" y1="772.5" x2="1544" y2="772.5"/>
<line x1="913" y1="780.5" x2="1544" y2="780.5"/>
<line x1="913" y1="788.5" x2="1544" y2="788.5"/>
<line x1="913" y1="796.5" x2="1544" y2="796.5"/>
<line x1="913" y1="804.5" x2="1544" y2="804.5"/>
<line x1="913" y1="812.5" x2="1544" y2="812.5"/>
<line x1="913" y1="820.5" x2="1544" y2="820.5"/>
<line x1="913" y1="828.5" x2="1544" y2="828.5"/>
</g>
<g shape-rendering="crispEdges"><line x1="913" y1="748.5" x2="1544" y2="748.5" stroke="#e6e600" stroke-width="1"/><line x1="913" y1="836.5" x2="1544" y2="836.5" stroke="#00f000" stroke-width="1.6"/></g>
<line x1="1302.5" y1="618" x2="1302.5" y2="682" stroke="#fff" stroke-width="1" stroke-dasharray="5 3" shape-rendering="crispEdges"/>
<line x1="1299" y1="654.5" x2="1543" y2="654.5" stroke="#f5c08a" stroke-width="1.2" shape-rendering="crispEdges"/>
<polyline points="1302,663 1304,661.8 1350,661.8 1352,662.6 1356,661.6 1362,662.6 1368,661.6 1378,662.4 1384,661.6 1392,662.4 1396,661.6 1543,661.6" fill="none" stroke="#ffff00" stroke-width="1.5"/>
<polyline points="1302,660 1303,654 1305,653 1308,655 1310,653 1312,653 1314,655 1316,654 1318,654 1320,653 1323,654 1327,653 1329,652 1331,653 1333,654 1336,654 1339,653 1342,653 1344,652 1347,654 1350,653 1354,652 1356,654 1358,653 1361,652 1364,652 1366,653 1368,651 1372,653 1375,652 1378,650 1380,652 1382,652 1384,651 1387,650 1391,651 1394,652 1397,652 1400,652 1402,650 1404,651 1407,650 1411,651 1413,652 1417,651 1420,652 1424,651 1426,651 1428,650 1430,650 1432,650 1434,652 1436,652 1438,651 1442,651 1445,652 1448,650 1451,652 1453,651 1457,651 1459,652 1461,652 1464,652 1466,651 1469,651 1471,652 1473,650 1475,652 1478,650 1481,651 1484,652 1486,650 1489,650 1493,652 1496,652 1498,652 1500,651 1503,650 1506,651 1508,652 1510,650 1513,652 1517,652 1520,650 1522,650 1524,651 1527,652 1529,650 1533,650 1536,651 1538,652 1541,651" fill="none" stroke="#00e000" stroke-width="1" shape-rendering="crispEdges"/>
<polyline points="1302,661 1303,655 1307,654 1311,654 1313,655 1315,654 1317,655 1321,655 1323,656 1325,654 1329,654 1331,651 1333,654 1337,654 1340,654 1343,654 1347,655 1350,655 1352,654 1354,653 1356,653 1359,654 1361,654 1364,652 1367,652 1370,654 1372,652 1376,652 1379,652 1381,652 1383,652 1386,652 1388,653 1391,651 1393,651 1396,653 1399,652 1403,652 1405,651 1407,652 1409,652 1411,652 1414,653 1417,653 1420,652 1422,653 1425,651 1428,652 1430,651 1432,651 1435,651 1437,647 1439,652 1442,651 1445,652 1448,653 1450,653 1452,652 1454,653 1456,649 1458,652 1461,653 1464,652 1466,652 1469,650 1472,653 1474,650 1476,651 1478,646 1480,651 1482,651 1484,651 1487,652 1490,651 1494,653 1496,652 1500,651 1503,651 1505,651 1509,652 1513,651 1517,652 1519,653 1521,651 1524,653 1527,652 1531,652 1533,652 1537,653 1541,651" fill="none" stroke="#00ffff" stroke-width="1" shape-rendering="crispEdges"/>
<polyline points="1302,660 1303,656 1305,655 1308,655 1311,656 1313,655 1315,655 1318,655 1321,653 1323,655 1326,655 1329,654 1333,653 1336,652 1340,655 1343,653 1345,652 1349,652 1353,654 1355,653 1358,652 1361,653 1363,652 1365,653 1367,649 1369,653 1371,653 1374,651 1377,653 1380,653 1382,651 1385,652 1388,651 1391,652 1393,652 1397,651 1399,653 1403,652 1406,651 1410,650 1413,651 1416,651 1419,651 1421,652 1425,652 1427,651 1430,651 1432,650 1434,651 1438,650 1440,645 1442,651 1444,651 1446,651 1449,650 1451,650 1454,651 1457,652 1459,650 1462,653 1464,651 1468,652 1470,652 1472,651 1475,650 1477,652 1479,652 1481,652 1484,652 1486,651 1488,651 1492,650 1495,651 1497,651 1499,650 1502,650 1505,650 1508,652 1510,652 1513,652 1516,652 1518,651 1520,650 1523,650 1527,650 1530,652 1534,650 1536,650 1539,650 1542,651" fill="none" stroke="#ff00ff" stroke-width="1" shape-rendering="crispEdges"/>
<polyline points="1302,659 1303,655 1305,653 1309,654 1312,654 1315,653 1318,652 1320,653 1323,653 1326,652 1328,653 1330,653 1333,652 1336,652 1338,649 1340,653 1342,649 1344,653 1347,652 1351,651 1354,653 1358,653 1360,651 1363,652 1366,652 1369,651 1371,652 1373,652 1376,651 1380,650 1382,650 1384,647 1386,651 1388,652 1390,650 1392,647 1394,650 1397,650 1400,651 1404,651 1406,651 1409,651 1412,650 1414,650 1418,650 1420,646 1422,652 1424,651 1426,646 1428,652 1430,647 1432,651 1435,651 1437,647 1439,650 1441,646 1443,651 1445,650 1447,649 1451,650 1453,646 1455,650 1458,649 1460,651 1463,651 1466,649 1468,644 1470,651 1472,648 1474,651 1476,651 1478,647 1480,650 1483,651 1485,650 1488,650 1490,646 1492,651 1495,650 1497,646 1499,650 1502,651 1504,650 1506,646 1508,651 1510,651 1514,650 1516,650 1518,650 1520,650 1522,652 1524,651 1526,651 1528,651 1532,650 1535,650 1538,651 1541,649 1543,649" fill="none" stroke="#f0f0f0" stroke-width="1" shape-rendering="crispEdges"/>
<polyline points="1302,659 1303,654 1306,653 1310,653 1313,653 1316,653 1319,653 1322,653 1325,652 1327,653 1330,652 1333,653 1336,653 1339,652 1341,652 1344,652 1347,652 1349,651 1351,651 1354,652 1358,651 1362,652 1364,650 1366,652 1368,651 1371,651 1373,651 1375,650 1378,651 1381,650 1385,650 1388,650 1392,651 1395,650 1398,650 1400,650 1402,650 1405,649 1408,650 1411,649 1414,649 1418,649 1421,651 1424,650 1428,650 1430,650 1434,650 1437,650 1440,650 1443,650 1446,650 1448,650 1450,650 1452,650 1456,650 1460,651 1463,650 1465,650 1468,650 1471,650 1474,651 1476,650 1480,650 1482,649 1486,650 1488,650 1492,650 1496,650 1498,650 1502,651 1504,649 1506,650 1509,649 1511,651 1514,650 1517,651 1519,650 1523,651 1527,650 1530,650 1534,650 1536,649 1538,649 1542,649" fill="none" stroke="#a8d0ff" stroke-width="1" shape-rendering="crispEdges"/>
</svg>
<span class="t" style="left:868.52px;top:373.00px;font-size:12.3px;color:#000;transform:scaleX(0.9449);">System Stability Test - AIDA64</span>
<span class="t" style="left:1031.66px;top:373.00px;font-size:12.3px;color:#000;transform:scaleX(0.8738);">[ TRIAL VERSION ]</span>
<span class="t" style="left:899.22px;top:420.00px;font-size:12.3px;color:#000;transform:scaleX(0.8639);">Stress CPU</span>
<span class="t" style="left:899.23px;top:440.00px;font-size:12.3px;color:#000;transform:scaleX(0.8506);">Stress FPU</span>
<span class="t" style="left:899.20px;top:460.00px;font-size:12.3px;color:#000;transform:scaleX(0.9020);">Stress cache</span>
<span class="t" style="left:899.17px;top:480.00px;font-size:12.3px;color:#000;transform:scaleX(0.9401);">Stress system memory</span>
<span class="t" style="left:899.19px;top:500.00px;font-size:12.3px;color:#000;transform:scaleX(0.9141);">Stress local disks</span>
<span class="t" style="left:899.22px;top:520.00px;font-size:12.3px;color:#000;transform:scaleX(0.8628);">Stress GPU(s)</span>
<span class="t" style="left:862.22px;top:439.00px;font-size:11.3px;color:#000;transform:scaleX(0.8427);">%</span>
<span class="t" style="left:1030.90px;top:425.00px;font-size:12.3px;color:#000;transform:scaleX(0.9819);">Date &amp; Time</span>
<span class="t" style="left:1180.68px;top:425.00px;font-size:12.3px;color:#000;transform:scaleX(0.9305);">Status</span>
<span class="t" style="left:1031.34px;top:447.00px;font-size:12.3px;color:#000;transform:scaleX(0.9096);">14/01/2022 13:20:25</span>
<span class="t" style="left:1180.67px;top:447.00px;font-size:12.3px;color:#000;transform:scaleX(0.9398);">Stability Test: Started</span>
<span class="t" style="left:870.67px;top:548.00px;font-size:12.3px;color:#000;transform:scaleX(0.9505);">Temperatures</span>
<span class="t" style="left:954.17px;top:550.00px;font-size:12.3px;color:#000;transform:scaleX(0.9496);">Cooling Fans</span>
<span class="t" style="left:1035.17px;top:550.00px;font-size:12.3px;color:#000;transform:scaleX(0.9390);">Voltages</span>
<span class="t" style="left:1091.18px;top:550.00px;font-size:12.3px;color:#000;transform:scaleX(0.9339);">Powers</span>
<span class="t" style="left:1141.42px;top:550.00px;font-size:12.3px;color:#000;transform:scaleX(0.9502);">Clocks</span>
<span class="t" style="left:1189.39px;top:550.00px;font-size:12.3px;color:#000;transform:scaleX(0.9888);">Unified</span>
<span class="t" style="left:1238.67px;top:550.00px;font-size:12.3px;color:#000;transform:scaleX(0.9484);">Statistics</span>
<span class="t" style="left:1006.14px;top:577.00px;font-size:11.6px;color:#ffff00;transform:scaleX(1.0510);-webkit-text-stroke:0.15px currentColor;">Motherboard</span>
<span class="t" style="left:1101.26px;top:577.00px;font-size:11.6px;color:#a8d0ff;transform:scaleX(0.8449);-webkit-text-stroke:0.15px currentColor;">CPU</span>
<span class="t" style="left:1148.47px;top:577.00px;font-size:11.6px;color:#00e800;transform:scaleX(0.9209);-webkit-text-stroke:0.15px currentColor;">CPU Core #1</span>
<span class="t" style="left:1238.46px;top:577.00px;font-size:11.6px;color:#00ffff;transform:scaleX(0.9246);-webkit-text-stroke:0.15px currentColor;">CPU Core #2</span>
<span class="t" style="left:1328.72px;top:577.00px;font-size:11.6px;color:#ff00ff;transform:scaleX(0.9209);-webkit-text-stroke:0.15px currentColor;">CPU Core #3</span>
<span class="t" style="left:1417.96px;top:577.00px;font-size:11.6px;color:#e6e6e6;transform:scaleX(0.9290);-webkit-text-stroke:0.15px currentColor;">CPU Core #4</span>
<span class="t" style="left:1168.22px;top:598.00px;font-size:11.6px;color:#ffcc99;transform:scaleX(0.9177);-webkit-text-stroke:0.15px currentColor;">Samsung SSD 970 EVO 500GB</span>
<span class="t" style="left:904.49px;top:614.00px;font-size:11px;color:#fff;transform:scaleX(0.9214);">100<span style="font-size:9px;position:relative;top:-6px;margin:0 1px">o</span>C</span>
<span class="t" style="left:917.54px;top:680.00px;font-size:11px;color:#fff;transform:scaleX(0.8365);">0<span style="font-size:9px;position:relative;top:-6px;margin:0 1px">o</span>C</span>
<span class="t" style="left:1259.96px;top:689.00px;font-size:11px;color:#fff;transform:scaleX(0.9867);">13:20:25</span>
<span class="t" style="left:1546.05px;top:644.00px;font-size:11px;color:#a8d0ff;transform:scaleX(0.9930);">56</span>
<span class="t" style="left:1546.05px;top:657.00px;font-size:11px;color:#ffff00;transform:scaleX(0.9930);">36</span>
<span class="t" style="left:1559.95px;top:645.00px;font-size:11px;color:#00e800;">51</span>
<span class="t" style="left:1559.95px;top:646.00px;font-size:11px;color:#ff00ff;">50</span>
<span class="t" style="left:1559.95px;top:648.00px;font-size:11px;color:#00ffff;">48</span>
<span class="t" style="left:1559.95px;top:650.00px;font-size:11px;color:#ffcc99;">46</span>
<span class="t" style="left:1154.07px;top:729.00px;font-size:11px;color:#ffff00;transform:scaleX(0.9580);">CPU Usage</span>
<span class="t" style="left:1215.45px;top:729.00px;font-size:11px;color:#fff;">|</span>
<span class="t" style="left:1224.67px;top:729.00px;font-size:11px;color:#00ff00;transform:scaleX(1.0546);">CPU Throttling</span>
<span class="t" style="left:882.38px;top:744.00px;font-size:11px;color:#fff;transform:scaleX(0.9536);">100%</span>
<span class="t" style="left:893.87px;top:833.00px;font-size:11px;color:#fff;transform:scaleX(0.9646);">0%</span>
<span class="t" style="left:1546.17px;top:744.00px;font-size:11px;color:#ffff00;transform:scaleX(0.9609);">100%</span>
<span class="t" style="left:1546.20px;top:833.00px;font-size:11px;color:#00ff00;transform:scaleX(0.9051);">0%</span>
<span class="t" style="left:863.01px;top:887.00px;font-size:12.3px;color:#000;transform:scaleX(0.9564);">Remaining Battery:</span>
<span class="t" style="left:988.16px;top:886.00px;font-size:11.6px;color:#00ff00;transform:scaleX(1.0107);">No battery</span>
<span class="t" style="left:1078.64px;top:887.00px;font-size:12.3px;color:#000;transform:scaleX(0.9063);">Test Started:</span>
<span class="t" style="left:1172.70px;top:886.00px;font-size:11.6px;color:#00ff00;transform:scaleX(0.9410);">14/01/2022 13:20:25</span>
<span class="t" style="left:1317.03px;top:887.00px;font-size:12.3px;color:#000;transform:scaleX(0.9213);">Elapsed Time:</span>
<span class="t" style="left:1419.76px;top:886.00px;font-size:11.6px;color:#00ff00;transform:scaleX(0.9272);">00:10:05</span>
<span class="t" style="left:871.92px;top:932.00px;font-size:12.3px;color:#838383;transform:scaleX(0.9453);">Start</span>
<span class="t" style="left:952.66px;top:932.00px;font-size:12.3px;color:#000;transform:scaleX(0.9617);">Stop</span>
<span class="t" style="left:1056.42px;top:932.00px;font-size:12.3px;color:#000;transform:scaleX(0.9376);">Clear</span>
<span class="t" style="left:1137.96px;top:932.00px;font-size:12.3px;color:#000;transform:scaleX(0.8833);">Save</span>
<span class="t" style="left:1236.94px;top:932.00px;font-size:12.3px;color:#000;transform:scaleX(0.9090);">CPUID</span>
<span class="t" style="left:1304.63px;top:932.00px;font-size:12.3px;color:#000;transform:scaleX(0.9259);">Preferences</span>
<span class="t" style="left:1556.83px;top:932.00px;font-size:12.3px;color:#838383;transform:scaleX(0.9349);">Close</span>
<svg style="left:1186px;top:146px" width="16" height="24" viewBox="1186 146 16 24">
 <path d="M1188.5 148.6 L1188.5 164.2 L1192.4 160.8 L1195.2 166.9 L1197.5 165.9 L1194.9 159.9 L1199.4 159.6 Z" fill="#fff" stroke="#111" stroke-width="1.1" stroke-linejoin="round"/>
</svg>

</body></html>
